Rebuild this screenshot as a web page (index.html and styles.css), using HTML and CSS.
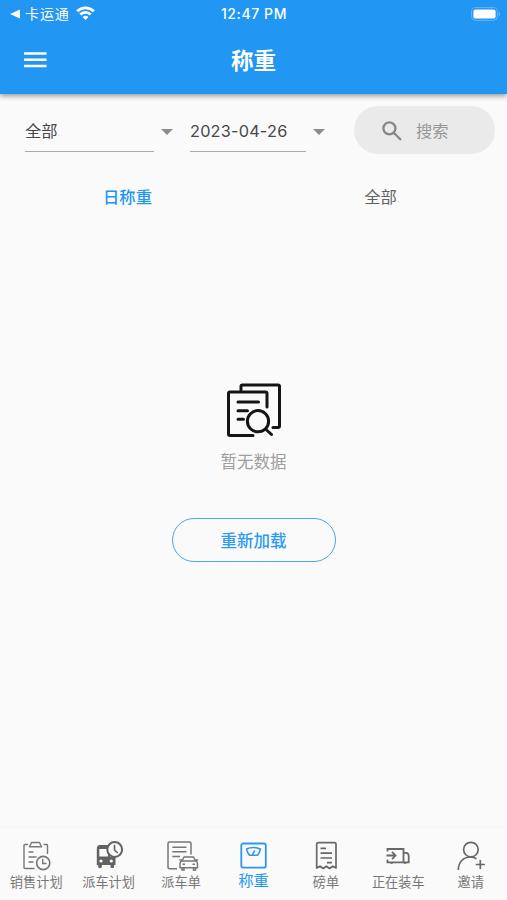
FILE: index.html
```html
<!DOCTYPE html>
<html lang="zh-CN">
<head>
  <meta charset="UTF-8">
  <title>称重</title>
  <link rel="stylesheet" href="styles.css">
</head>
<body>

<header class="header">
  <div class="status">
    <div class="status-left">
      <svg width="10" height="10" viewBox="0 0 10 10"><path d="M0 5L10 .5v9z" fill="#fff"/></svg>
      <span class="back-app">卡运通</span>
      <svg class="wifi" width="19" height="14" viewBox="0 0 19 14" fill="none" stroke="#fff" stroke-width="2.8">
        <path d="M1.2 5.2a11.8 11.8 0 0 1 16.6 0M4.3 8.6a7.4 7.4 0 0 1 10.400 0"/>
        <path d="M9.500 14L6.600 11a4 4 0 0 1 5.800 0z" fill="#fff" stroke="none"/>
      </svg>
    </div>
    <div class="time">12:47 PM</div>
    <div class="status-right">
      <svg width="30" height="14" viewBox="0 0 30 14">
        <rect x=".6" y=".6" width="25.8" height="12.8" rx="4" fill="none" stroke="#fff" stroke-opacity=".3"/>
        <rect x="2.400" y="2.400" width="22.200" height="9.200" rx="2.200" fill="#fff"/>
        <path d="M27.800 5v4c1.800-.6 1.800-3.400 0-4z" fill="#fff" fill-opacity=".4"/>
      </svg>
    </div>
  </div>
  <div class="toolbar">
    <svg class="menu" width="23" height="16" viewBox="0 0 23 16" fill="#fff"><path d="M0 .3h22.500v2.500H0zM0 6.500h22.500v2.500H0zM0 12.700h22.500v2.500H0z"/></svg>
    <h1>称重</h1>
  </div>
</header>

<main>
  <div class="filters">
    <div class="select type">全部</div>
    <svg class="arrow" width="12" height="6" viewBox="0 0 12 6"><path d="M0 0h12L6 6z" fill="#8c8c8c"/></svg>
    <div class="select date">2023-04-26</div>
    <svg class="arrow" width="12" height="6" viewBox="0 0 12 6"><path d="M0 0h12L6 6z" fill="#8c8c8c"/></svg>
    <div class="search">
      <svg width="20" height="20" viewBox="0 0 20 20" fill="none" stroke="#878787" stroke-width="2.300"><circle cx="7.400" cy="7.400" r="6"/><path d="M11.800 11.800l7.200 7.200"/></svg>
      <span>搜索</span>
    </div>
  </div>

  <div class="tabs">
    <div class="tab active">日称重</div>
    <div class="tab">全部</div>
  </div>

  <div class="empty">
    <svg width="56" height="56" viewBox="0 0 56 56" fill="none" stroke="#151515" stroke-width="3" stroke-linecap="round" stroke-linejoin="round">
      <path d="M15 7V3.500Q15 2 16.500 2H52Q53.500 2 53.500 3.500V43Q53.500 44.500 52 44.500H47"/>
      <path d="M41 24V10.500Q41 9 39.500 9H4Q2.500 9 2.500 10.500V51Q2.500 52.500 4 52.500H27"/>
      <path d="M12 19H32.500M12 27.700H21.500M12 36.300H17.500M40 46.500L45.500 51.500"/>
      <circle cx="32" cy="38.200" r="10.600"/>
    </svg>
    <p>暂无数据</p>
    <button class="reload">重新加载</button>
  </div>
</main>

<nav class="nav">
  <div class="nav-item">
    <svg width="32" height="32" viewBox="0 0 32 32" fill="none" stroke="#777" stroke-width="1.400">
      <path d="M8 4.500H5Q4 4.500 4 5.500V27.500Q4 28.500 5 28.500H14.500M23.500 4.500H26.500Q27.500 4.500 27.500 5.500V14"/>
      <path d="M11.500 2.500H19.500L21.500 6.800H9.500z" stroke-linejoin="round"/>
      <path d="M8.500 12h5M8.500 17h8M8.500 22h5"/>
      <circle cx="23.200" cy="23" r="6.600" stroke-width="1.600"/><path d="M22.700 18.800V23.500H26.500"/>
    </svg>
    <span>销售计划</span>
  </div>
  <div class="nav-item">
    <svg width="32" height="32" viewBox="0 0 32 32">
      <path d="M7 5H17V17H22.500V25H21V27.500Q19.500 28.500 17.500 27.500V25H8.800V27.500Q7 28.500 5.200 27.500V25H3.800V9Q3.800 5 7 5z" fill="#626262"/>
      <path d="M6.300 9H15V16.500H6.300z" fill="#fafafa"/>
      <circle cx="8" cy="21" r="1.600" fill="#fafafa"/><circle cx="18.300" cy="21" r="1.600" fill="#fafafa"/>
      <circle cx="21.700" cy="9.500" r="7.400" fill="#fafafa" stroke="#626262" stroke-width="2"/>
      <path d="M21.500 4.800V10L24.700 13" fill="none" stroke="#626262" stroke-width="1.600"/>
    </svg>
    <span>派车计划</span>
  </div>
  <div class="nav-item">
    <svg width="32" height="32" viewBox="0 0 32 32" fill="none" stroke="#777" stroke-width="1.500">
      <path d="M12 28.700H4.500Q3 28.700 3 27.200V3.500Q3 2 4.500 2H24.500Q26 2 26 3.500V14.500"/>
      <path d="M7.300 7.300H21.500M7.300 11.700H21.500M7.300 16.500H15"/>
      <path d="M17 21L19 17H28.500L30.500 21Q32.500 21.500 32.500 23.500V27.800H15V23.500Q15 21.500 17 21zM17 21H30.500M14.300 20H17M30.500 20H33.200" stroke-linejoin="round"/>
      <path d="M17 28V30H19V28M28.500 28V30H30.500V28M17.500 24.300H20M27.500 24.300H30"/>
    </svg>
    <span>派车单</span>
  </div>
  <div class="nav-item active">
    <svg width="32" height="32" viewBox="0 0 32 32" fill="none" stroke="#2b97ef" stroke-width="1.800" stroke-linejoin="round">
      <rect x="4.300" y="3.500" width="24.500" height="24.200" rx="2"/>
      <path d="M9.500 9Q16.500 6 23.500 9Q22.700 12.500 20.500 15.300H12.500Q10.300 12.500 9.500 9zM15.500 14.800L17.800 10.300" stroke-width="1.500"/>
    </svg>
    <span>称重</span>
  </div>
  <div class="nav-item">
    <svg width="32" height="32" viewBox="0 0 32 32" fill="none" stroke="#686868" stroke-width="1.700">
      <path d="M6.700 28V4.200Q6.700 2.700 8.200 2.700H24.500Q26 2.700 26 4.200V28L22.800 26.200L19.600 28.500L16.400 26.200L13.200 28.500L10 26.200z" stroke-linejoin="round"/>
      <path d="M10.500 8.300H16M10.500 13.200H22M10.500 18H22M17 22.700H22"/>
    </svg>
    <span>磅单</span>
  </div>
  <div class="nav-item">
    <svg width="32" height="32" viewBox="0 0 32 32" fill="none" stroke="#686868" stroke-width="1.800">
      <path d="M5.500 11.500V9H21.500V22.300H5.500V19.500M21.500 12.800H24.500Q26.700 13.500 26.700 16V22.300H21.500"/>
      <path d="M4.500 15.500H13M10 11.800L13.500 15.500L10 19.200"/>
      <path d="M9.500 22v1.800M23 22v1.800" stroke-width="2.500"/>
    </svg>
    <span>正在装车</span>
  </div>
  <div class="nav-item">
    <svg width="32" height="32" viewBox="0 0 32 32" fill="none" stroke="#686868" stroke-width="1.700">
      <circle cx="15.900" cy="9.600" r="7.300"/>
      <path d="M3.300 30C3.300 22 8.500 17 15.500 17Q19 17 21.500 18.800M25.300 20V29M20.700 24.500H29.900"/>
    </svg>
    <span>邀请</span>
  </div>
</nav>

</body>
</html>
```

FILE: styles.css
```css
* {
  box-sizing: border-box;
}
body {
  margin: 0;
  height: 900px;
  display: flex;
  flex-direction: column;
  background: #fafafa;
  color: #484848;
  font-family: Inter, "Noto Sans CJK SC", sans-serif;
  overflow: hidden;
}
.header {
  height: 94px;
  background: #2196f3;
  color: white;
  box-shadow: 0 2px 5px rgba(0, 0, 0, 0.4);
}
.status {
  display: grid;
  grid-template-columns: 1fr auto 1fr;
  align-items: center;
  height: 27px;
  padding: 0 6px 0 10px;
}
.status-left {
  display: flex;
  align-items: center;
}
.back-app {
  margin-left: 5px;
  font-size: 14px;
  letter-spacing: 0.9px;
  line-height: 20px;
}
.wifi {
  margin-left: 6px;
  margin-bottom: 2px;
}
.time {
  margin-right: 3px;
  font-size: 14px;
  font-weight: 500;
  letter-spacing: 0.6px;
}
.status-right {
  display: flex;
  justify-content: flex-end;
}
.toolbar {
  display: grid;
  grid-template-columns: 1fr auto 1fr;
  align-items: center;
  height: 66px;
  padding: 0 24px;
}
h1 {
  margin: 2px 0 0;
  font-size: 22.5px;
  font-weight: 600;
  line-height: 30px;
}
main {
  flex: 1;
}
.filters {
  display: flex;
  align-items: center;
  height: 48px;
  margin-top: 12px;
  padding: 0 12px 0 25px;
}
.select {
  height: 42px;
  padding-top: 9px;
  border-bottom: 1px solid #aaa;
  font-size: 16.3px;
  line-height: 24px;
  align-self: flex-end;
  margin-bottom: 2px;
}
.type {
  width: 129px;
}
.date {
  width: 116px;
  letter-spacing: 0.2px;
}
.arrow {
  margin: 3px 17px 0 7px;
}
.date + .arrow {
  margin-right: 29px;
}
.search {
  display: flex;
  align-items: center;
  flex: 1;
  height: 48px;
  padding-left: 28px;
  border-radius: 24px;
  background: #eaeaea;
  color: #969696;
  font-size: 16.3px;
}
.search svg {
  margin-top: 2px;
}
.search span {
  margin-left: 14px;
}
.tabs {
  display: flex;
  margin-top: 19px;
}
.tab {
  flex: 1;
  text-align: center;
  font-size: 16.3px;
  line-height: 48px;
  color: #626262;
}
.tab.active {
  padding-left: 1px;
  color: #2196f3;
  font-weight: 500;
}
.empty {
  display: flex;
  flex-direction: column;
  align-items: center;
  margin-top: 162px;
}
.empty p {
  margin: 11px 0 0;
  font-size: 16.5px;
  line-height: 24px;
  color: #9e9e9e;
}
.reload {
  width: 164px;
  height: 44px;
  margin-top: 44px;
  padding: 0;
  border: 1.5px solid #4ba5ef;
  border-radius: 22px;
  background: none;
  color: #2d9af1;
  font-family: inherit;
  font-size: 16.5px;
  font-weight: 500;
}
.nav {
  display: flex;
  height: 72px;
  padding-top: 12px;
  background: #fafafa;
  box-shadow: 0 0 5px rgba(0, 0, 0, 0.04);
}
.nav-item {
  flex: 1;
  display: flex;
  flex-direction: column;
  align-items: center;
  color: #777;
  font-size: 13.2px;
  line-height: 20px;
}
.nav-item svg {
  overflow: visible;
}
.nav-item.active {
  color: #2196f3;
  font-size: 15.3px;
  line-height: 18px;
}
```
